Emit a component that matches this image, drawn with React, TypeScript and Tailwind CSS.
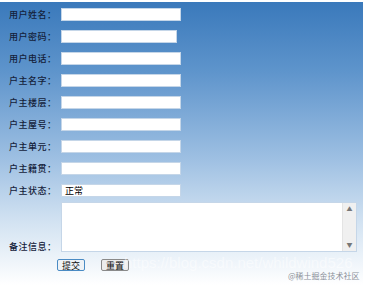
import React from "react";

const rows = [
  { label: "用户姓名：", w: "w-[120px]" },
  { label: "用户密码：", w: "w-[116px]" },
  { label: "用户电话：", w: "w-[120px]" },
  { label: "户主名字：", w: "w-[120px]" },
  { label: "户主楼层：", w: "w-[120px]" },
  { label: "户主屋号：", w: "w-[120px]" },
  { label: "户主单元：", w: "w-[120px]" },
  { label: "户主籍贯：", w: "w-[120px]" },
  { label: "户主状态：", w: "w-[120px]", value: "正常" },
];

export default function App() {
  return (
    <div className="w-[367px] h-[285px] bg-white pt-[2px] font-['Noto_Sans_CJK_SC',sans-serif]">
      <div className="relative w-[363px] h-[283px] bg-[linear-gradient(180deg,#3a79bb_0%,#5f95cc_25%,#9dbfe2_55%,#d3e3f2_78%,#ffffff_100%)] pl-[9px] pt-[6px] text-[9px] leading-none text-[#14213a]">
        <div className="flex flex-col gap-[9px]">
          {rows.map((r) => (
            <div key={r.label} className="flex items-center h-[13px]">
              <span className="w-[52px] tracking-[0.5px] font-medium">{r.label}</span>
              <div
                className={`${r.w} h-[13px] bg-white border border-[#c5d6e8] px-[3px] flex items-center text-[9px] text-black`}
              >
                {r.value}
              </div>
            </div>
          ))}
        </div>
        <div className="flex items-end mt-[5px]">
          <span className="w-[52px] tracking-[0.5px] pb-[1px] font-medium">备注信息：</span>
          <div className="w-[296px] h-[50px] bg-white border border-[#c5d6e8] flex">
            <div className="flex-1" />
            <div className="w-[14px] bg-[#f0f0f0] border-l border-[#e4e4e4] flex flex-col justify-between items-center py-[3px] text-[6px] text-[#777]">
              <span>▲</span>
              <span>▼</span>
            </div>
          </div>
        </div>
        <div className="flex items-center gap-[16px] ml-[48px] mt-[7px]">
          <button className="w-[28px] h-[12px] border-[1.5px] border-[#4a8bc4] bg-[#eef2f6] rounded-[2px] text-[9px] flex items-center justify-center text-[#111]">
            提交
          </button>
          <button className="w-[28px] h-[12px] border border-[#8a8a8a] bg-[#ececec] rounded-[2px] text-[9px] flex items-center justify-center text-[#111]">
            重置
          </button>
        </div>
        <span className="absolute left-[124px] top-[252px] text-[15px] leading-[17px] text-white/50 font-['Liberation_Sans',sans-serif]">
          https://blog.csdn.net/whildwind526
        </span>
        <span className="absolute left-[288px] top-[270px] text-[8px] text-[#8a9099]">
          @稀土掘金技术社区
        </span>
      </div>
    </div>
  );
}
